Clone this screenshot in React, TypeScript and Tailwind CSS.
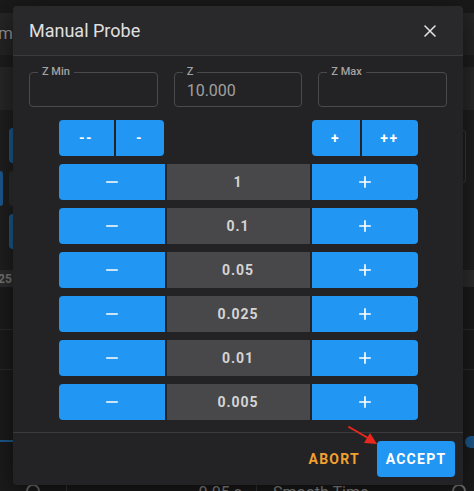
import React from 'react'

const STEPS = ['1', '0.1', '0.05', '0.025', '0.01', '0.005']

const MinusIcon = () => (
  <svg width="20" height="20" viewBox="0 0 24 24" fill="currentColor" aria-hidden>
    <path d="M19,13H5V11H19V13Z" />
  </svg>
)

const PlusIcon = () => (
  <svg width="20" height="20" viewBox="0 0 24 24" fill="currentColor" aria-hidden>
    <path d="M19,13H13V19H11V13H5V11H11V5H13V11H19V13Z" />
  </svg>
)

const CloseIcon = () => (
  <svg width="14" height="14" viewBox="0 0 14 14" aria-hidden>
    <path d="M2 2L12 12M12 2L2 12" stroke="currentColor" strokeWidth="1.6" strokeLinecap="round" />
  </svg>
)

const OutlinedField = ({ label, value }: { label: string; value?: string }) => (
  <div className="relative h-[35px] rounded border border-[#4a4a4c] px-[12px] flex items-center">
    <span className="absolute -top-[8px] left-[8px] px-1 bg-[#232325] text-[11px] leading-[14px] font-medium text-[#a3a3a3]">
      {label}
    </span>
    <span className="mt-[3px] text-[16px] text-[#a0a0a0]">{value}</span>
  </div>
)

// the page under the modal, mostly hidden, only its edges show
const Background = () => (
  <div className="w-full h-full bg-[#1c1c1c]">
    <div className="h-[13px] bg-[#1a1a1a]" />
    <div className="h-[42px] bg-[#262626] flex items-center">
      <div className="w-[13px] overflow-hidden flex justify-end whitespace-nowrap text-[17px] text-[#9a9a9a]">
        Zoom
      </div>
    </div>
    <div className="h-[12px] bg-[#1e1e1e]" />
    <div className="h-[43px] bg-[#292929]" />
    <div className="h-[160px] bg-[#202020] flex justify-between">
      <div className="w-[13px] flex flex-col pt-[18px] gap-[8px]">
        <div className="h-[35px] ml-[9px] rounded-l bg-[#1d5d94]" />
        <div className="h-[35px] flex justify-between">
          <div className="w-[3px] bg-[#1d5d94] rounded-r" />
          <div className="w-[4px] bg-[#303030] rounded-l" />
        </div>
        <div className="h-[35px] ml-[9px] rounded-l bg-[#1d5d94]" />
      </div>
      <div className="w-[11px] pt-[20px]">
        <div className="h-[53px] w-[3px] border border-l-0 border-[#3a3a3a] rounded-r" />
      </div>
    </div>
    <div className="h-[17px] bg-[#2e2e2e] flex items-center text-[12px] font-bold text-[#7a7a7a]">
      <span className="-ml-[2px]">25</span>
    </div>
    <div className="h-[43px] border-b border-[#2c2c2c]" />
    <div className="h-[40px] border-b border-[#2c2c2c]" />
    <div className="h-[70px]" />
    <div className="h-[2px] w-[13px] bg-[#1d5d94]" />
    <div className="h-[41px] flex justify-end">
      <div className="-mt-[6px] w-[9px] h-[12px] rounded-l-full bg-[#1d5d94]" />
    </div>
    <div className="flex items-start text-[16px] leading-[20px] text-[#9a9a9a] whitespace-nowrap">
      <div className="w-[67px] border-r border-[#3a3a3a] h-[20px] flex justify-center">
        <div className="mt-[1px] w-[14px] h-[14px] rounded-full border-2 border-[#777]" />
      </div>
      <div className="w-[190px] border-r border-[#3a3a3a] h-[20px] flex justify-end pr-[14px]">0.05 s</div>
      <div className="pl-[16px] flex-1">Smooth Time</div>
      <div className="w-[30px] flex justify-center">
        <div className="mt-[1px] w-[14px] h-[14px] rounded-full border-2 border-[#777]" />
      </div>
    </div>
  </div>
)

export default function App() {
  return (
    <div className="relative w-[474px] h-[491px] overflow-hidden font-['Roboto',sans-serif]">
      <Background />

      <div className="absolute left-[13px] top-[6px] w-[450px] h-[479px] flex flex-col rounded bg-[#232325] shadow-[0_8px_30px_rgba(0,0,0,0.6)] overflow-hidden">
        <header className="h-[50px] shrink-0 flex items-center justify-between pl-4 pr-[26px] bg-[#29292b] border-b border-[#3a3a3c]">
          <p className="text-[18px] text-[#e0e0e0]">Manual Probe</p>
          <button className="text-[#e0e0e0]" aria-label="Close">
            <CloseIcon />
          </button>
        </header>

        <div className="px-4 pt-4 pb-3 border-b border-[#3a3a3c]">
          <div className="grid grid-cols-3 gap-4">
            <OutlinedField label="Z Min" />
            <OutlinedField label="Z" value="10.000" />
            <OutlinedField label="Z Max" />
          </div>

          <div className="w-[359px] mx-auto mt-[13px]">
            <div className="flex justify-between h-9 text-[14px] font-bold text-white tracking-[1.5px]">
              <div className="flex gap-[2px]">
                <button className="w-[55px] rounded-l bg-[#2196f3]">--</button>
                <button className="w-[48px] rounded-r bg-[#2196f3]">-</button>
              </div>
              <div className="flex gap-[2px]">
                <button className="w-[48px] rounded-l bg-[#2196f3]">+</button>
                <button className="w-[56px] rounded-r bg-[#2196f3]">++</button>
              </div>
            </div>

            {STEPS.map((step) => (
              <div key={step} className="mt-2 h-9 grid grid-cols-[106px_143px_106px] gap-[2px]">
                <button className="rounded-l bg-[#2196f3] text-white flex items-center justify-center">
                  <MinusIcon />
                </button>
                <div className="bg-[#48484b] flex items-center justify-center text-[14px] font-bold tracking-[1px] text-[#d4d4d4]">
                  {step}
                </div>
                <button className="rounded-r bg-[#2196f3] text-white flex items-center justify-center">
                  <PlusIcon />
                </button>
              </div>
            ))}
          </div>
        </div>

        <div className="flex-1 flex items-center justify-end gap-[9px] px-2">
          <button className="h-9 px-2 text-[14px] font-bold tracking-[1.25px] text-[#f0a030]">ABORT</button>
          <button className="h-9 w-[78px] rounded bg-[#2196f3] text-[14px] font-bold tracking-[1.25px] text-white">
            ACCEPT
          </button>
        </div>
      </div>

      <svg className="absolute left-[346px] top-[424px]" width="34" height="26" viewBox="0 0 34 26" aria-hidden>
        <path d="M3 3L22 14" stroke="#e8281e" strokeWidth="2" strokeLinecap="round" />
        <polygon points="31,20 18,19 24,9" fill="#e8281e" />
      </svg>
    </div>
  )
}
